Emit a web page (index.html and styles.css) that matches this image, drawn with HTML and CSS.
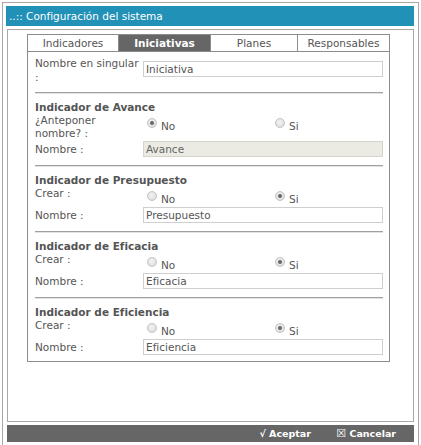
FILE: index.html
```html
<!DOCTYPE html>
<html lang="es">
<head>
<meta charset="utf-8">
<title>Configuración del sistema</title>
<link rel="stylesheet" href="styles.css">
</head>
<body>
<div class="frame">
  <div class="title">..:: Configuración del sistema</div>
  <div class="panel">
    <div class="tabs">
      <div class="tab">Indicadores</div>
      <div class="tab active">Iniciativas</div>
      <div class="tab">Planes</div>
      <div class="tab">Responsables</div>
    </div>
    <div class="box">
      <div class="row first">
        <div class="label">Nombre en singular :</div>
        <input class="field" type="text" value="Iniciativa">
      </div>
      <div class="sep"></div>

      <div class="section">
        <div class="heading">Indicador de Avance</div>
        <div class="row radios">
          <div class="label">¿Anteponer nombre? :</div>
          <label class="opt"><span class="radio on"></span>No</label>
          <label class="opt"><span class="radio"></span>Si</label>
        </div>
        <div class="row name">
          <div class="label">Nombre :</div>
          <input class="field disabled" type="text" value="Avance" disabled>
        </div>
      </div>
      <div class="sep"></div>

      <div class="section">
        <div class="heading">Indicador de Presupuesto</div>
        <div class="row radios">
          <div class="label">Crear :</div>
          <label class="opt"><span class="radio"></span>No</label>
          <label class="opt"><span class="radio on"></span>Si</label>
        </div>
        <div class="row name">
          <div class="label">Nombre :</div>
          <input class="field" type="text" value="Presupuesto">
        </div>
      </div>
      <div class="sep"></div>

      <div class="section">
        <div class="heading">Indicador de Eficacia</div>
        <div class="row radios">
          <div class="label">Crear :</div>
          <label class="opt"><span class="radio"></span>No</label>
          <label class="opt"><span class="radio on"></span>Si</label>
        </div>
        <div class="row name">
          <div class="label">Nombre :</div>
          <input class="field" type="text" value="Eficacia">
        </div>
      </div>
      <div class="sep"></div>

      <div class="section last">
        <div class="heading">Indicador de Eficiencia</div>
        <div class="row radios">
          <div class="label">Crear :</div>
          <label class="opt"><span class="radio"></span>No</label>
          <label class="opt"><span class="radio on"></span>Si</label>
        </div>
        <div class="row name">
          <div class="label">Nombre :</div>
          <input class="field" type="text" value="Eficiencia">
        </div>
      </div>
    </div>
  </div>
  <div class="footer">
    <span class="btn">&#8730; Aceptar</span>
    <span class="btn"><span class="xbox">&#9746;</span> Cancelar</span>
  </div>
</div>
</body>
</html>
```

FILE: styles.css
```css
html, body {
  margin: 0;
  padding: 0;
  background: #fff;
}
body {
  font-family: "DejaVu Sans", Verdana, sans-serif;
  font-size: 10.5px;
  color: #555;
}
.frame {
  margin: 2px 2px 0 2px;
  border: 1px solid #a8a8a8;
  border-bottom: none;
  padding: 3px 3px 6px 3px;
}
.title {
  height: 20px;
  line-height: 20px;
  background: #2291b7;
  color: #fff;
  font-size: 10.5px;
  padding-left: 3px;
  margin-right: 1px;
}
.panel {
  margin: 3px 1px 0 1px;
  border: 1px solid #a8a8a8;
  height: 387px;
  padding: 4px 0 0 19px;
}
.tabs {
  display: grid;
  grid-template-columns: 90px 92px 87px 1fr;
  width: 363px;
  box-sizing: border-box;
  border: 1px solid #8c8c8c;
  border-bottom: none;
}
.tab {
  height: 16px;
  line-height: 16px;
  text-align: center;
  border-left: 1px solid #8c8c8c;
  color: #555;
}
.tab:first-child { border-left: none; }
.tab.active {
  background: #666;
  color: #fff;
  font-weight: bold;
}
.box {
  width: 363px;
  box-sizing: border-box;
  border: 1px solid #8c8c8c;
  padding: 3px 6px 6px 7px;
}
.row {
  display: grid;
  grid-template-columns: 108px 128px 1fr;
  line-height: 13px;
}
.row.first {
  grid-template-columns: 108px 1fr;
  padding-top: 1px;
  line-height: 14px;
}
.row.first .field { margin-top: 5px; }
.label { color: #555; }
.field {
  height: 16px;
  box-sizing: border-box;
  border: 1px solid #cfcfcf;
  font-family: "DejaVu Sans", Verdana, sans-serif;
  font-size: 10.5px;
  color: #555;
  padding: 0 2px;
  margin: 0;
  width: 240px;
  background: #fff;
  outline: none;
}
.field.disabled {
  background: #ebebe4;
  border-color: #d4d4cc;
  color: #666;
}
.row.name {
  grid-template-columns: 108px 1fr;
  margin-top: 1px;
  line-height: 16px;
}
.section .row.name { margin-bottom: 1px; }
.section.last .row.name { margin-bottom: 0; }
.row.radios { min-height: 18px; }
.opt {
  display: flex;
  align-items: flex-start;
  padding-top: 5px;
  line-height: 14px;
  color: #555;
}
.radio {
  width: 10px;
  height: 10px;
  box-sizing: border-box;
  border-radius: 50%;
  border: 1px solid #c4c4c4;
  background: radial-gradient(circle at 45% 40%, #f4f4f4, #d6d6d6);
  margin: 0 4px 0 4px;
  position: relative;
  top: -1px;
}
.radio.on::after {
  content: "";
  position: absolute;
  left: 2px;
  top: 2px;
  width: 4px;
  height: 4px;
  border-radius: 50%;
  background: #666;
}
.sep {
  height: 0;
  border-top: 1px solid #a0a0a0;
  border-bottom: 1px solid #e2e2e2;
  margin-top: 8px;
}
.section { padding-top: 6px; }
.heading {
  font-weight: bold;
  line-height: 14px;
  color: #555;
}
.footer {
  margin: 3px 1px 0 1px;
  height: 17px;
  line-height: 17px;
  background: #666;
  text-align: right;
  padding-right: 18px;
  color: #fff;
  font-weight: bold;
  font-size: 9.5px;
}
.btn { margin-left: 22px; }
.xbox {
  font-weight: normal;
  font-size: 11px;
}
```
